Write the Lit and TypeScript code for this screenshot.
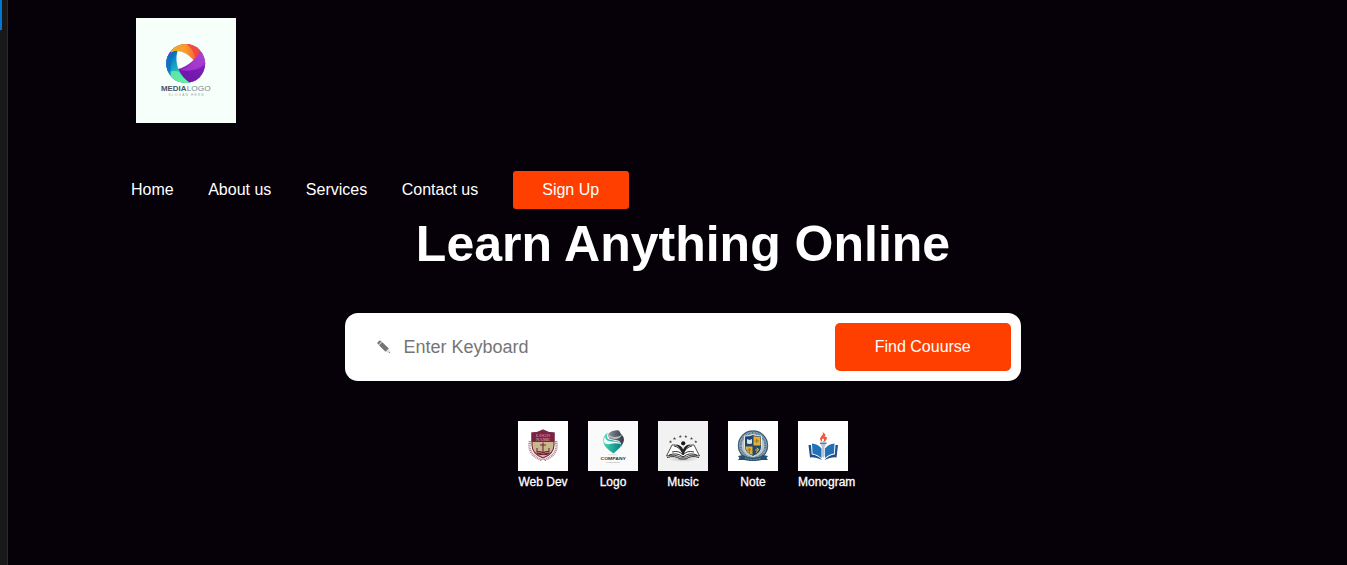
import { LitElement, html, css, svg } from "lit";
import { customElement } from "lit/decorators.js";

const mediaLogo = html`<svg class="brand" viewBox="0 0 100 105" aria-label="Media logo">
  <defs>
    <clipPath id="disc"><circle cx="49.7" cy="45.6" r="19.5" /></clipPath>
    <linearGradient id="warm" x1="0" x2="1"><stop offset="0" stop-color="#e8b01c" /><stop offset=".5" stop-color="#fb9a2c" /><stop offset="1" stop-color="#f5503c" /></linearGradient>
    <linearGradient id="violet" x1="1" y1="0" x2="0" y2="1"><stop offset="0" stop-color="#c765dd" /><stop offset=".5" stop-color="#9226c4" /><stop offset="1" stop-color="#5a119f" /></linearGradient>
    <linearGradient id="cool" x1="0" y1="0" x2=".6" y2="1"><stop offset="0" stop-color="#0652b8" /><stop offset=".5" stop-color="#15a5c4" /><stop offset="1" stop-color="#69f0a4" /></linearGradient>
  </defs>
  <rect width="100" height="105" fill="#f6fff9" />
  <g clip-path="url(#disc)">
    <rect x="29" y="25" width="42" height="42" fill="url(#violet)" />
    <path d="M42 51Q56 56 70 44V56Q62 67 53 65Q46 60 42 51Z" fill="#6815aa" opacity=".7" />
    <path d="M44 52Q58 49 63 32L70 38V46Q60 55 44 52Z" fill="#a43bcd" opacity=".75" />
    <path d="M35 32Q42 24 51 25L64 30Q62 38 57 42Q50 34 41 33Q37 33 35 36Z" fill="url(#warm)" />
    <path d="M49 25Q58 31 59 40Q63 37 65 31L58 25Z" fill="#f04440" opacity=".85" />
    <path d="M29 46Q30 33 42 33Q40 42 42 50Q46 60 54 65L46 67Q29 61 29 46Z" fill="url(#cool)" />
    <path d="M31 54Q40 52 43 54Q47 61 54 65L48 67Q35 64 31 54Z" fill="#63eda2" opacity=".85" />
    <path d="M31 38Q36 33 41 33Q33 43 35 58Q30 53 29 47Z" fill="#0870c4" opacity=".8" />
    <path d="M41.500 33Q50 33.500 57.500 42Q51 48.500 42.300 51Q39 42 41.500 33Z" fill="#f8fffb" />
  </g>
  <text x="25" y="73.4" textLength="25.5" lengthAdjust="spacingAndGlyphs" font-size="6.5" font-weight="700" fill="#4b5564">MEDIA</text>
  <text x="50.7" y="73.4" textLength="24" lengthAdjust="spacingAndGlyphs" font-size="6.5" fill="#7c8590">LOGO</text>
  <text x="32.5" y="78" textLength="35" font-size="3.1" fill="#9ba4a5">SLOGAN HERE</text>
</svg>`;

const crest = svg`<rect width="50" height="50" fill="#fff"/>
  <g fill="none" stroke="#b98c97" stroke-width="2.6" stroke-dasharray="1.1 .7"><path d="M12 20Q9 34 24 39"/><path d="M38 20Q41 34 26 39"/></g>
  <path d="M14 12Q20 12 25 9Q30 12 36 12V24Q36 33 25 37Q14 33 14 24Z" fill="#c8b98c" stroke="#7a2340" stroke-width="1.1"/>
  <path d="M13.5 11.500Q20 12 25 9Q30 12 36.500 11.500V21H13.500Z" fill="#7b2441"/>
  <text x="25" y="15.700" text-anchor="middle" textLength="14" font-size="4.500" font-family="Liberation Serif, serif" font-weight="700" fill="#c990a2">LOGO</text>
  <text x="25" y="20" text-anchor="middle" textLength="14" font-size="4.500" font-family="Liberation Serif, serif" font-weight="700" fill="#c990a2">NAME</text>
  <path d="M25 21.500V32M22 24H28M19 27V31Q22 30 25 32Q28 30 31 31V27" fill="none" stroke="#76243e" stroke-width="1.100"/>
  <path d="M18 32Q22 31 25 33Q28 31 32 32L29 34H21Z" fill="#76243e"/>
  <path d="M22 39.500L25 38L28 39.500" fill="none" stroke="#a88089" stroke-width=".8"/>`;

const company = svg`<defs><linearGradient id="teal" x2="1"><stop stop-color="#45dab5"/><stop offset="1" stop-color="#087f83"/></linearGradient>
  <linearGradient id="steel" x2="1"><stop stop-color="#8b949b"/><stop offset=".5" stop-color="#59636d"/><stop offset="1" stop-color="#303b46"/></linearGradient></defs>
  <rect width="50" height="50" fill="#fafafa"/>
  <path d="M21 12Q25 8.500 31 9.500L33 13Q37 16 35.500 21L33 26Q34 21 30 19.500L22 18Q19 15 21 12Z" fill="url(#steel)"/>
  <path d="M21 14Q26 18 34 14Q30 20 23 17Q20 16 21 14Z" fill="#b7bec2"/>
  <path d="M20 11.500Q17 16 21 18.500L30 20.500Q34 22 32.500 26L25.500 32.500Q17 27 15.500 22Q14 15 20 11.500Z" fill="url(#teal)"/>
  <path d="M17 15Q17 20 24 20.500Q31 20 33 23Q27 21.500 22 23Q17 24 15.500 20Z" fill="#eff8f6"/>
  <ellipse cx="25" cy="33.800" rx="5" ry=".5" fill="#d7dada"/>
  <text x="12.500" y="39" textLength="25.500" lengthAdjust="spacingAndGlyphs" font-size="4.200" font-weight="700" fill="#29343f">COMPANY</text>
  <text x="18" y="41.600" textLength="14" font-size="2.200" fill="#a2a5a6">LOGO DESIGN</text>`;

const book = svg`<defs><radialGradient id="shade"><stop stop-color="#bbb"/><stop offset="1" stop-color="#f2f2f2"/></radialGradient></defs>
  <rect width="50" height="50" fill="#f2f2f2"/><ellipse cx="25" cy="38" rx="15" ry="3" fill="url(#shade)"/>
  <path d="M8.500 35L14 24Q20 23 25 29Q30 23 36 24L41.500 35Q33 33 28 36H22Q17 33 8.500 35Z" fill="#fff" stroke="#222" stroke-width=".8"/>
  <path d="M9 36.500Q17 34 22 38H28Q33 34 41 36.500M11 34Q19 31 25 36Q31 31 39 34M14 31Q21 29 25 34Q29 29 36 31M16 25Q22 26 25 33Q28 26 34 25" fill="none" stroke="#1d1d1d" stroke-width=".9"/>
  <circle cx="25.200" cy="22.300" r="2.100" fill="#171717"/>
  <path d="M18 23.500Q24 24 25.200 29Q26 24 32 23.500Q28 27 25.200 34Q22 27 18 23.500Z" fill="#252525"/>
  ${[[12.5, 20.8], [16.5, 17.5], [22.3, 15.4], [27.8, 15.4], [33.5, 17.4], [37.8, 20.7]].map(([x, y]) => svg`<path transform="translate(${x} ${y})" d="M0-1.500L.5-.5L1.500-.4L.7.300L1 1.400L0 .8L-1 1.400L-.7.300L-1.500-.4L-.5-.5Z" fill="#4a4a4a"/>`)}`;

const seal = svg`<rect width="50" height="50" fill="#fff"/>
  <circle cx="25" cy="24.500" r="14.500" fill="#b8c6cf" stroke="#3d607d" stroke-width="1.400"/>
  <circle cx="25" cy="24.500" r="12.400" fill="none" stroke="#54728a" stroke-width="2.200" stroke-dasharray="1 .5"/>
  <path d="M16.500 15Q22 15 25 13.500Q28 15 33.500 15V26Q33.500 32 25 35.500Q16.500 32 16.500 26Z" fill="#20486e" stroke="#e4e6dc" stroke-width="1"/>
  <path d="M25.500 15Q28 16 32.500 16V24.500H25.500ZM17.500 25.500H24.500V34Q17.500 31 17.500 26Z" fill="#e5af30"/>
  <path d="M19 18L21.500 19L24 18V22.500L21.500 23L19 22.500Z" fill="#d9e2e8"/>
  <path d="M26.800 20H31M28.800 18V22M21.300 27V32M19.500 29H23" stroke="#93762f" stroke-width="1"/>
  <path d="M28.500 27L30.500 28L28 32M27 29H31" fill="none" stroke="#d8b24f" stroke-width="1"/>
  <path d="M10 35L15 34Q25 40 35 34L40 35L38.500 37L40 39H34Q25 41 16 39H10L11.500 37Z" fill="#28506f"/>
  <path d="M17 36.800Q25 40.500 33 36.800" fill="none" stroke="#8ba3b3" stroke-width="1" stroke-dasharray="1 .6"/>`;

const torch = svg`<rect width="50" height="50" fill="#fff"/>
  <path d="M24.500 21Q20.500 19 23 15.500Q26 13 24.500 11Q29 13.500 26.500 16Q30 15 28.500 18.500Q27.500 21 25 21Q27 18 25 17.500Q23 18.500 24.500 21Z" fill="#ef5b36"/>
  <path d="M22.500 23H28L26.500 26V35L25.200 37L24 35V26Z" fill="#b3c4d6"/>
  <path d="M22 21.500H28.500V23H22Z" fill="#527fae"/>
  <path d="M14 22.500Q20 23 23.500 27.500V37Q19 33 14.500 32.500ZM36.500 22.500Q30.500 23 27 27.500V37Q31 33 36 32.500Z" fill="#2272b5"/>
  <path d="M10.500 24H13L13.700 33.500Q20 34 24 39Q17 35.500 12 36.500ZM40 24H37.500L36.800 33.500Q30.500 34 26.500 39Q33.500 35.500 38.500 36.500Z" fill="#214f86"/>`;

const categories = [
  { label: "Web Dev", art: crest },
  { label: "Logo", art: company },
  { label: "Music", art: book },
  { label: "Note", art: seal },
  { label: "Monogram", art: torch },
];

@customElement("app-root")
export class AppRoot extends LitElement {
  static styles = css`
    :host { display: flex; height: 565px; overflow: hidden; background: #060008; color: #fff; font-family: "Liberation Sans", Arial, sans-serif; }
    svg { display: block; }
    .rail { box-sizing: border-box; width: 8px; flex: none; background: #181818; border-right: 1px solid #2b2b2b; }
    .marker { width: 2px; height: 30px; background: #0078d4; }
    .page { flex: 1; min-width: 0; }
    .brand { width: 100px; height: 105px; margin: 18px 0 0 128px; }
    .nav { display: flex; align-items: center; gap: 34.5px; height: 38px; margin: 48px 0 0 123px; font-size: 16px; }
    .link { color: inherit; text-decoration: none; white-space: nowrap; }
    .signup { box-sizing: border-box; width: 116px; height: 38px; line-height: 38px; text-align: center; background: #ff3f00; border-radius: 3px; }
    .hero { display: flex; flex-direction: column; align-items: center; width: 1350px; }
    .title { margin: 6px 0 0; font-size: 50px; line-height: 58px; font-weight: 700; white-space: nowrap; }
    .search { box-sizing: border-box; display: flex; align-items: center; width: 675.4px; height: 68px; margin: 40px .4px 0 0; padding: 10px 10px 10px 32px; background: #fff; border-radius: 13px; }
    .pencil { width: 14px; height: 14px; margin-right: 12.4px; }
    .field { flex: 1; min-width: 0; padding: 0; border: 0; outline: 0; background: transparent; font: 18px "Liberation Sans", Arial, sans-serif; }
    .field::placeholder { color: #757575; opacity: 1; }
    .find { width: 175.500px; height: 48px; padding: 0; border: 0; border-radius: 5px; background: #ff3f00; color: #fff; font: 16px "Liberation Sans", Arial, sans-serif; }
    .categories { display: flex; gap: 20px; margin-top: 40px; }
    .category { width: 50px; font-size: 12px; line-height: 14px; text-align: center; white-space: nowrap; }
    .thumb { width: 50px; height: 50px; margin-bottom: 4px; }
    .label { -webkit-text-stroke: .3px #fff; }
  `;

  render() {
    return html`
      <div class="rail"><div class="marker"></div></div>
      <main class="page">
        ${mediaLogo}
        <nav class="nav">
          <a class="link">Home</a><a class="link">About us</a><a class="link">Services</a><a class="link">Contact us</a>
          <a class="link signup">Sign Up</a>
        </nav>
        <section class="hero">
          <h1 class="title">Learn Anything Online</h1>
          <div class="search">
            <svg class="pencil" viewBox="0 0 14 14"><path d="M.5 2.500L2 .9Q3 .2 4 1L4.600 1.600L1.500 4.700L.8 4Q0 3.200.5 2.500ZM2 5.200L5.100 2.100L11.800 8.500L8.500 11.800Z" fill="#757575"/><path d="M9 12L12 9L13.200 13.200Z" fill="#d8d8d8"/><path d="M11.900 12.800L12.800 11.900L13.300 13.300Z" fill="#666"/></svg>
            <input class="field" placeholder="Enter Keyboard" />
            <button class="find">Find Couurse</button>
          </div>
          <div class="categories">
            ${categories.map((c) => html`<div class="category"><svg class="thumb" viewBox="0 0 50 50">${c.art}</svg><div class="label">${c.label}</div></div>`)}
          </div>
        </section>
      </main>`;
  }
}
